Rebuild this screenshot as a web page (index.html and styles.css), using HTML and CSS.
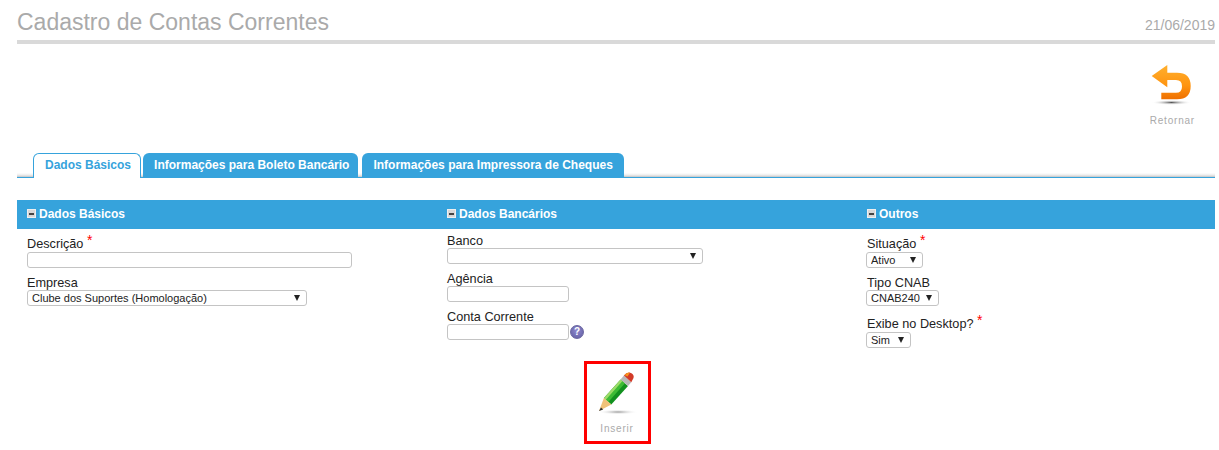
FILE: index.html
```html
<!DOCTYPE html>
<html lang="pt-BR">
<head>
    <meta charset="UTF-8">
    <title>Cadastro de Contas Correntes</title>
    <link rel="stylesheet" href="styles.css">
</head>
<body>
    <div class="page-header">
        <h1>Cadastro de Contas Correntes</h1>
        <span class="page-date">21/06/2019</span>
    </div>

    <div class="toolbar">
        <a class="action-btn" href="#">
            <svg width="46" height="46" viewBox="0 0 46 46">
                <defs>
                    <linearGradient id="arrowFill" x1="0" y1="0" x2="0" y2="1">
                        <stop offset="0" stop-color="#ffb02e"/>
                        <stop offset="0.6" stop-color="#ff9410"/>
                        <stop offset="1" stop-color="#ee6f00"/>
                    </linearGradient>
                    <radialGradient id="arrowShadow">
                        <stop offset="0" stop-color="#555"/>
                        <stop offset="1" stop-color="#fff" stop-opacity="0"/>
                    </radialGradient>
                </defs>
                <ellipse cx="23.500" cy="40.500" rx="20" ry="2.500" fill="url(#arrowShadow)"/>
                <path d="M19.300 3 L3.700 14 L19.300 25.300 L19.300 18 L28 18 Q34 18 34 24.400 Q34 30.700 28 30.700 L13.300 30.700 L13.300 37.300 L29 37.300 Q42.700 37.300 42.700 24 Q42.700 10.700 29 10.700 L19.300 10.700 Z" fill="url(#arrowFill)"/>
            </svg>
            <span class="return-label">Retornar</span>
        </a>
    </div>

    <ul class="tabs">
        <li class="tab active">Dados Básicos</li>
        <li class="tab">Informações para Boleto Bancário</li>
        <li class="tab">Informações para Impressora de Cheques</li>
    </ul>

    <div class="section-bar">
        <div class="section-title"><span class="collapse-icon"></span>Dados Básicos</div>
        <div class="section-title"><span class="collapse-icon"></span>Dados Bancários</div>
        <div class="section-title"><span class="collapse-icon"></span>Outros</div>
    </div>

    <div class="form-columns">
        <div class="form-col">
            <div class="field">
                <label class="required" for="descricao">Descrição <em>*</em></label>
                <input type="text" id="descricao" class="w-325">
            </div>
            <div class="field">
                <label for="empresa">Empresa</label>
                <div class="select-wrap w-280">
                    <select id="empresa"><option>Clube dos Suportes (Homologação)</option></select>
                </div>
            </div>
        </div>
        <div class="form-col">
            <div class="field">
                <label for="banco">Banco</label>
                <div class="select-wrap w-256">
                    <select id="banco"><option></option></select>
                </div>
            </div>
            <div class="field">
                <label for="agencia">Agência</label>
                <input type="text" id="agencia" class="w-122">
            </div>
            <div class="field">
                <label for="conta">Conta Corrente</label>
                <div class="input-help">
                    <input type="text" id="conta" class="w-122">
                    <span class="help-icon">?</span>
                </div>
            </div>
        </div>
        <div class="form-col">
            <div class="field">
                <label class="required" for="situacao">Situação <em>*</em></label>
                <div class="select-wrap w-57">
                    <select id="situacao"><option>Ativo</option></select>
                </div>
            </div>
            <div class="field">
                <label for="cnab">Tipo CNAB</label>
                <div class="select-wrap w-73">
                    <select id="cnab"><option>CNAB240</option></select>
                </div>
            </div>
            <div class="field">
                <label class="required" for="desktop">Exibe no Desktop? <em>*</em></label>
                <div class="select-wrap w-45">
                    <select id="desktop"><option>Sim</option></select>
                </div>
            </div>
        </div>
    </div>

    <div class="submit-row">
        <a class="action-btn insert-btn" href="#">
            <svg width="46" height="46" viewBox="0 0 46 46">
                <defs>
                    <radialGradient id="pencilShadow">
                        <stop offset="0" stop-color="#999"/>
                        <stop offset="1" stop-color="#fff" stop-opacity="0"/>
                    </radialGradient>
                </defs>
                <ellipse cx="24" cy="43" rx="20" ry="2.500" fill="url(#pencilShadow)"/>
                <path d="M9.900 29 L26.600 10.400 L34 17 L17.300 35.600 Z" fill="#12911f"/>
                <path d="M9.900 29 L26.600 10.400 L29.500 13 L12.800 31.600 Z" fill="#9ddc6a"/>
                <path d="M11.800 30.700 L28.500 12.100 L31 14.300 L14.300 32.900 Z" fill="#3dbb35"/>
                <path d="M9.900 29 L17.300 35.600 L5 42 Z" fill="#f0c27a"/>
                <path d="M7 38.500 L9.200 40.500 L5 42 Z" fill="#333"/>
                <path d="M26.600 10.400 L29.900 6.600 L37.300 13.200 L34 17 Z" fill="#b8b8b8"/>
                <path d="M29.900 6.600 Q33 2.500 37 4 Q40.500 6 39.500 9 L37.300 13.200 Z" fill="#d23a28"/>
                <path d="M30.500 6 Q33 3 36 3.500 L33.500 7.500 Z" fill="#f7941d"/>
            </svg>
            <span>Inserir</span>
        </a>
    </div>
</body>
</html>
```

FILE: styles.css
```css
* {
    box-sizing: border-box;
}
body {
    font-family: "Liberation Sans", Arial, sans-serif;
    font-size: 12px;
    color: #222;
    margin: 0;
    padding: 0 4px 0 17px;
    background-color: #fff;
}

/* header */
.page-header {
    display: flex;
    justify-content: space-between;
    align-items: flex-end;
    height: 44px;
    padding-bottom: 4px;
    border-bottom: 4px solid #d9d9d9;
}
.page-header h1 {
    margin: 0;
    font-size: 23px;
    font-weight: normal;
    color: #aaa;
}
.page-date {
    font-size: 14px;
    color: #aaa;
    padding-bottom: 3px;
}

/* buttons with icon */
.toolbar {
    display: flex;
    justify-content: flex-end;
    height: 109px;
    padding: 18px 20px 0 0;
}
.action-btn {
    display: flex;
    flex-direction: column;
    align-items: center;
    text-decoration: none;
    color: #aaa;
    font-size: 10px;
    letter-spacing: 0.8px;
}
.action-btn span {
    margin-top: 7px;
}
.action-btn .return-label {
    margin-left: 2px;
}

/* tabs */
.tabs {
    display: flex;
    gap: 2px;
    list-style: none;
    margin: 0;
    padding: 0 0 0 16px;
    height: 25px;
    border-bottom: 1px solid #36a3dc;
    background: linear-gradient(#fff 83%, #ececec 92%, #c4c4c4);
}
.tab {
    height: 24px;
    line-height: 25px;
    padding: 0 9px 0 11px;
    font-weight: bold;
    color: #fff;
    background-color: #36a3dc;
    border-radius: 6px 6px 0 0;
}
.tab + .tab + .tab {
    margin-left: 2px;
    padding: 0 11px;
}
.tab.active {
    height: 25px;
    line-height: 23px;
    color: #36a3dc;
    background-color: #fff;
    border: 1px solid #36a3dc;
    border-bottom: none;
}

/* section bar */
.section-bar {
    display: flex;
    align-items: center;
    height: 29px;
    padding-bottom: 2px;
    margin-top: 22px;
    background-color: #36a3dc;
}
.section-title {
    display: flex;
    align-items: center;
    flex: 0 0 420px;
    padding-left: 10px;
    font-weight: bold;
    color: #fff;
}
.section-title:last-child {
    flex: 1;
}
.collapse-icon {
    display: inline-block;
    position: relative;
    width: 9px;
    height: 9px;
    margin-right: 3px;
    background-color: #d8d8d8;
    border: 1px solid #eee;
}
.collapse-icon::after {
    content: "";
    position: absolute;
    left: 1px;
    right: 1px;
    top: 3px;
    height: 2px;
    background-color: #444;
}

/* form */
.form-columns {
    display: flex;
    padding-top: 5px;
}
.form-col {
    flex: 0 0 420px;
    padding-left: 10px;
}
.form-col:last-child {
    flex: 1;
}
.form-col:last-child .select-wrap {
    margin-left: -1px;
}
.field {
    margin-bottom: 8px;
}
.field label {
    display: block;
    height: 14px;
    line-height: 14px;
    font-size: 12.700px;
}
.field label.required {
    height: 18px;
    line-height: 18px;
}
.field label em {
    font-style: normal;
    font-size: 14px;
    color: #f00;
    position: relative;
    top: -3px;
}
.field input {
    display: block;
    height: 16px;
    padding: 0 4px;
    border: 1px solid #c4c4c4;
    border-radius: 3px;
    background-color: #fff;
}
.select-wrap {
    position: relative;
    height: 16px;
}
.select-wrap::after {
    content: "";
    position: absolute;
    right: 7px;
    top: 5px;
    border-left: 3px solid transparent;
    border-right: 3px solid transparent;
    border-top: 6px solid #222;
    pointer-events: none;
}
.select-wrap select {
    display: block;
    width: 100%;
    height: 16px;
    padding: 0 0 0 4px;
    font-family: "Liberation Sans", Arial, sans-serif;
    font-size: 11px;
    color: #222;
    border: 1px solid #c4c4c4;
    border-radius: 3px;
    background-color: #fff;
    appearance: none;
}
.w-325 { width: 325px; }
.w-280 { width: 280px; }
.w-256 { width: 256px; }
.w-122 { width: 122px; }
.w-73 { width: 73px; }
.w-57 { width: 57px; }
.w-45 { width: 45px; }
.input-help {
    display: flex;
    align-items: flex-start;
    gap: 1px;
}
.help-icon {
    width: 14px;
    height: 14px;
    margin-top: 1px;
    border-radius: 50%;
    background: radial-gradient(circle at 50% 40%, #8f8ad0, #5f5a9e);
    border: 1px solid #6a66a0;
    color: #fff;
    font-size: 10px;
    font-weight: bold;
    line-height: 12px;
    text-align: center;
}

/* insert */
.submit-row {
    display: flex;
    justify-content: center;
    padding-left: 2px;
}
.insert-btn {
    width: 67px;
    height: 83px;
    margin-top: 5px;
    padding-top: 5px;
    border: 3px solid #f00;
}
.insert-btn span {
    margin-top: 8px;
}
```
